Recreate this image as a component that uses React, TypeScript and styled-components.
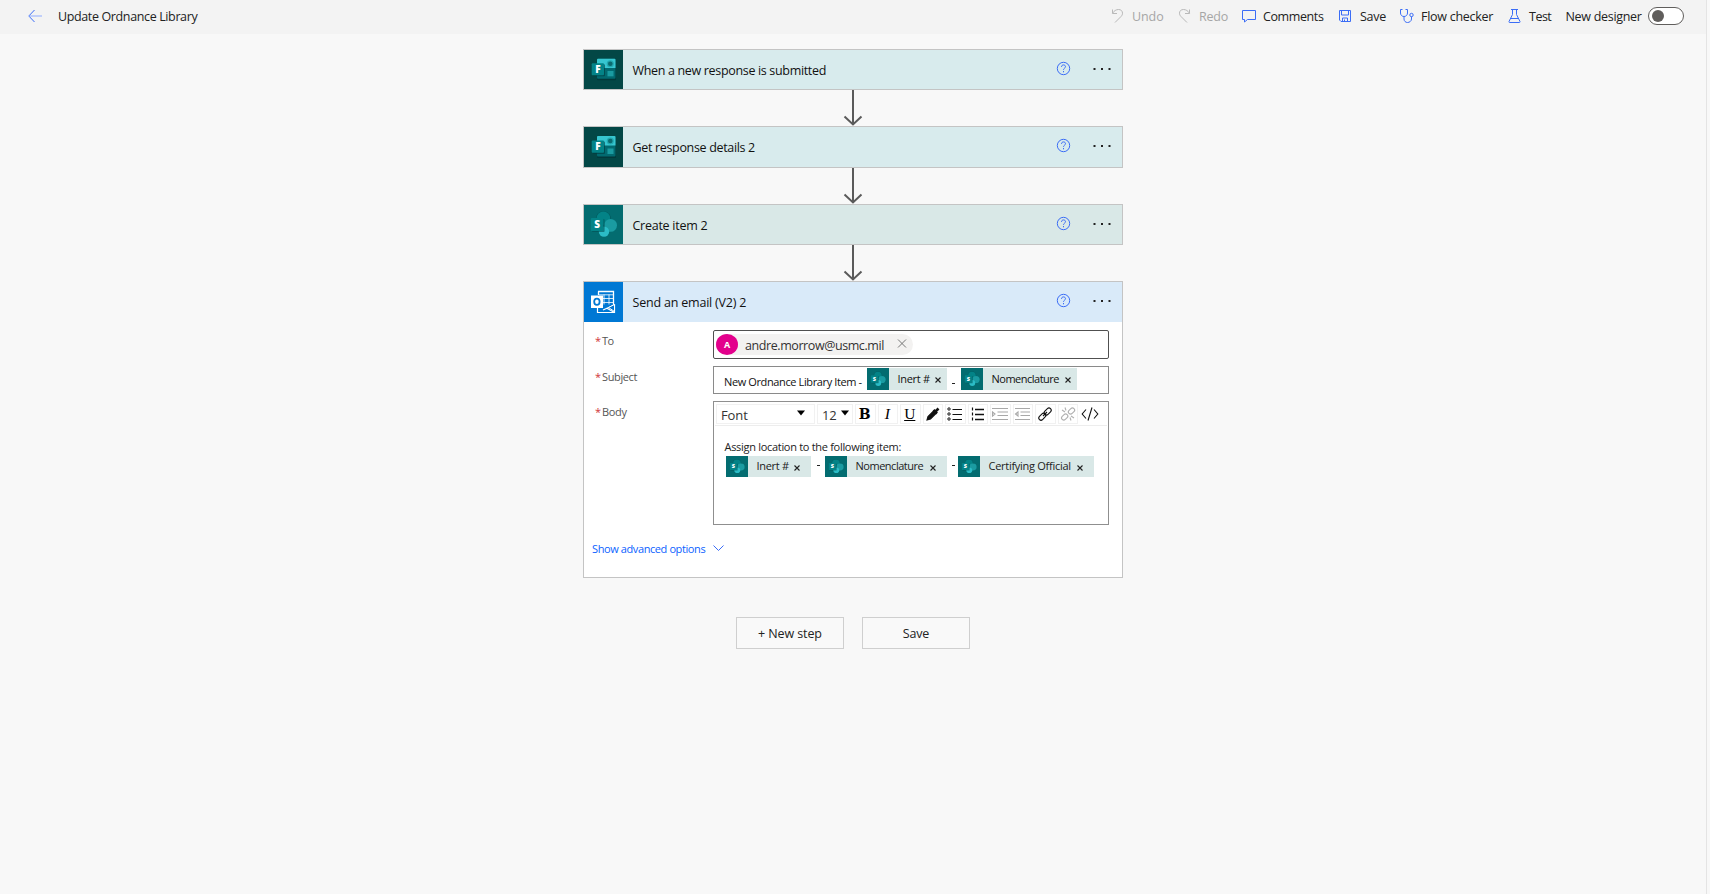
import React from 'react';
import styled, { createGlobalStyle, css } from 'styled-components';

const GlobalStyle = createGlobalStyle`
  * { box-sizing: border-box; }
  html, body, #root { height: 100%; }
  body {
    margin: 0;
    background: #f8f8f8;
    font-family: 'Open Sans', 'Noto Sans', sans-serif;
    color: #111;
    overflow: hidden;
  }
`;

const Page = styled.div`
  width: 1707px;
  height: 100%;
  border-right: 1px solid #e4e4e4;
  background: #f8f8f8;
`;

const Text = styled.span<{ $size?: number; $ls?: number; $color?: string; $w?: number; $drop?: number }>`
  display: block;
  flex: none;
  white-space: nowrap;
  line-height: 16px;
  padding-top: ${p => p.$drop ?? 0}px;
  font-size: ${p => p.$size ?? 12.5}px;
  letter-spacing: ${p => p.$ls ?? 0}px;
  color: ${p => p.$color ?? 'inherit'};
  ${p => p.$w && css`width: ${p.$w}px;`}
`;

/* header bar */
const Header = styled.header`
  height: 34px;
  padding: 0 22px 2px 28px;
  background: #f3f3f3;
  display: flex;
  align-items: center;
`;
const BackIcon = styled.svg`
  width: 15px;
  height: 14px;
  margin-right: 15px;
  flex: none;
`;
const Tools = styled.nav`
  margin-left: auto;
  display: flex;
  align-items: center;
`;
const Tool = styled.div<{ $w: number; $disabled?: boolean }>`
  width: ${p => p.$w}px;
  display: flex;
  align-items: center;
  color: ${p => (p.$disabled ? '#a6a6a6' : '#222')};
`;
const ToolIcon = styled.svg<{ $c?: string }>`
  width: 21px;
  height: 16px;
  flex: none;
  fill: none;
  stroke: ${p => p.$c ?? '#3b6df6'};
  stroke-width: 1;
`;
const Toggle = styled.div`
  width: 36px;
  height: 18px;
  border: 1px solid #605e5c;
  border-radius: 9px;
  background: #fff;
  display: flex;
  align-items: center;
  padding-left: 3px;
`;
const Knob = styled.div`
  width: 12px;
  height: 12px;
  border-radius: 50%;
  background: #605e5c;
`;

/* flow */
const Flow = styled.main`
  width: 540px;
  margin: 15px 0 0 583px;
`;
const Card = styled.section<{ $h: number; $bg: string }>`
  height: ${p => p.$h}px;
  border: 1px solid #c4c4c4;
  background: ${p => p.$bg};
`;
const CardHead = styled.div<{ $h?: number; $bg?: string }>`
  height: ${p => (p.$h ? p.$h + 'px' : '100%')};
  background: ${p => p.$bg ?? 'transparent'};
  display: flex;
  align-items: center;
  color: #111;
`;
const Connector = styled.svg`
  display: block;
  width: 40px;
  height: 36px;
  margin-left: 250px;
  fill: none;
  stroke: #5a5a5a;
  stroke-width: 2;
`;
const AppIcon = styled.svg<{ $s?: number }>`
  width: ${p => p.$s ?? 39}px;
  height: 100%;
  flex: none;
  display: block;
`;
const CardTitle = styled(Text)`
  margin-left: 9.5px;
  flex: 1;
`;
const HelpIcon = styled.svg`
  width: 15px;
  height: 15px;
  margin: 0 22px 3px 0;
  fill: none;
  stroke: #3b6df6;
`;
const Dots = styled.svg`
  width: 18px;
  height: 4px;
  margin: 0 11px 2px 0;
  fill: #222;
`;

/* email form */
const Form = styled.div`
  background: #fff;
  padding: 8px 13px 0 11px;
`;
const Row = styled.div<{ $gap?: number }>`
  display: flex;
  margin-bottom: ${p => p.$gap ?? 7}px;
`;
const Label = styled.div`
  width: 118px;
  flex: none;
  display: flex;
  padding-top: 3px;
  color: #555;
`;
const Star = styled(Text)`
  width: 7px;
  color: #d13438;
`;
const ToBox = styled.div`
  flex: 1;
  height: 29px;
  border: 1px solid #505050;
  border-radius: 2px;
  padding: 0 2px;
  display: flex;
  align-items: center;
`;
const Pill = styled.div`
  width: 197px;
  height: 21px;
  border-radius: 11px;
  background: #f3f2f1;
  display: flex;
  align-items: center;
`;
const Avatar = styled.div`
  width: 22px;
  height: 21px;
  border-radius: 50%;
  background: #e3008c;
  color: #fff;
  font-size: 9px;
  font-weight: 700;
  line-height: 21px;
  text-align: center;
  margin-right: 7px;
`;
const RemoveIcon = styled.svg`
  width: 10px;
  height: 10px;
  margin-bottom: 2px;
  fill: none;
  stroke: #777;
`;
const SubjectBox = styled.div`
  flex: 1;
  height: 28px;
  border: 1px solid #8a8a8a;
  padding: 1px 0 0 10px;
  display: flex;
  align-items: flex-start;
`;
const Token = styled.div<{ $w: number; $h: number }>`
  width: ${p => p.$w}px;
  height: ${p => p.$h}px;
  flex: none;
  background: #d9e8e7;
  display: flex;
  align-items: center;
`;
const TokenText = styled(Text)`
  margin: 0 0 1px 8.5px;
  flex: 1;
`;
const Cross = styled.svg<{ $mr: number; $mt: number }>`
  width: 6px;
  height: 6px;
  flex: none;
  margin: ${p => p.$mt}px ${p => p.$mr}px 0 0;
  stroke: #222;
  stroke-width: 1.1;
`;
const Dash = styled.div<{ $w: number; $top: number; $left: number }>`
  width: ${p => p.$w}px;
  padding: ${p => p.$top}px 0 0 ${p => p.$left}px;
  flex: none;
  &::before {
    content: '';
    display: block;
    width: 3px;
    height: 1px;
    background: #222;
  }
`;
const BodyBox = styled.div`
  flex: 1;
  height: 124px;
  border: 1px solid #8f8f8f;
`;
const EditBar = styled.div`
  height: 23px;
  margin: 1px 1px 0 1px;
  padding: 1px 0 0 1px;
  border-bottom: 1px solid #ededed;
  display: flex;
  gap: 2px;
`;
const Select = styled.div<{ $w: number }>`
  width: ${p => p.$w}px;
  height: 20px;
  border: 1px solid #f1f1f1;
  flex: none;
  display: flex;
  align-items: center;
  justify-content: space-between;
  padding: 2px 2px 0 4px;
  color: #333;
`;
const Caret = styled.svg<{ $mr: number }>`
  width: 8px;
  height: 6px;
  margin: 0 ${p => p.$mr}px 4px 0;
`;
const EditButton = styled.div<{ $plain?: boolean }>`
  width: 20.5px;
  height: 20px;
  flex: none;
  border: 1px solid ${p => (p.$plain ? 'transparent' : '#f1f1f1')};
  display: flex;
  align-items: center;
  justify-content: center;
`;
const Glyph = styled.span<{ $b?: boolean; $i?: boolean; $u?: boolean }>`
  font-family: ${p => (p.$b ? "'DejaVu Serif'" : "'Liberation Serif'")}, serif;
  font-size: ${p => (p.$b ? 14 : 15.5)}px;
  line-height: 16px;
  padding-right: 1px;
  color: #000;
  font-weight: ${p => (p.$b ? 700 : 400)};
  font-style: ${p => (p.$i ? 'italic' : 'normal')};
  text-decoration: ${p => (p.$u ? 'underline' : 'none')};
`;
const EditIcon = styled.svg<{ $c?: string }>`
  width: 18px;
  height: 16px;
  flex: none;
  fill: none;
  stroke: ${p => p.$c ?? '#111'};
  stroke-width: 1.1;
`;
const BodyText = styled.div`
  padding: 13px 0 0 10.5px;
  color: #222;
`;
const TokenRow = styled.div`
  display: flex;
  margin: 1px 0 0 1.5px;
`;
const Advanced = styled.div`
  display: flex;
  align-items: center;
  height: 16px;
  margin: 16px 0 0 -3px;
  color: #0b5fff;
`;
const Chevron = styled.svg`
  width: 11px;
  height: 6px;
  margin: 0 0 2px 8px;
  fill: none;
  stroke: #3b6df6;
`;
const Actions = styled.div`
  display: flex;
  gap: 18px;
  margin: 39px 0 0 153px;
`;
const Button = styled.button`
  width: 108px;
  height: 32px;
  border: 1px solid #cfcfcf;
  background: #f9f9f9;
  padding: 2px 0 0;
  font-family: inherit;
  color: #222;
  display: flex;
  align-items: center;
  justify-content: center;
`;

const FormsIcon = () => (
  <AppIcon viewBox="0 0 39 40" preserveAspectRatio="none">
    <rect width="39" height="40" fill="#034746" />
    <rect x="13" y="9.5" width="19" height="21.5" rx="1" fill="#02393b" />
    <rect x="13" y="9" width="18.5" height="20.5" rx="1" fill="#026a70" />
    <path d="M14 9h16.5a1 1 0 0 1 1 1v8.5H13V10a1 1 0 0 1 1-1z" fill="#37c6d0" />
    <circle cx="26.3" cy="14" r="3.6" fill="#23a9b0" />
    <circle cx="26.3" cy="14" r="2.3" fill="#0a6b70" />
    <rect x="23.5" y="21.5" width="6" height="5.5" fill="#1a9ba1" />
    <rect x="9" y="14.5" width="12" height="12.5" rx="1" fill="#023b3d" opacity=".6" />
    <rect x="7.7" y="13.5" width="12.3" height="12.3" rx="1" fill="#038387" />
    <text x="13.9" y="23.3" fontSize="10" fontWeight="800" fill="#fff" textAnchor="middle">F</text>
  </AppIcon>
);

const SharePointIcon = ({ size }: { size?: number }) => (
  <AppIcon $s={size} viewBox="0 0 39 39" preserveAspectRatio="none">
    <rect width="39" height="39" fill="#036c70" />
    <circle cx="19.4" cy="13.8" r="7.6" fill="#025a5e" />
    <circle cx="19.4" cy="13.4" r="6.8" fill="#038387" />
    <circle cx="26.6" cy="20.4" r="6.4" fill="#1a9ba1" />
    <circle cx="20" cy="26.6" r="5.2" fill="#2bbcc6" />
    <rect x="8" y="14" width="12.6" height="13" rx="1" fill="#024f52" opacity=".6" />
    <rect x="6.8" y="13" width="12.6" height="13" rx="1" fill="#038387" />
    <text x="13.1" y="23" fontSize="10" fontWeight="800" fill="#fff" textAnchor="middle">S</text>
  </AppIcon>
);

const OutlookIcon = () => (
  <AppIcon viewBox="0 0 39 40">
    <rect width="39" height="40" fill="#0078d4" />
    <g fill="none" stroke="#fff">
      <path d="M14 9.5h15.5V27M14.5 9.5V13" strokeWidth="1.3" />
      <path d="M15 12.8h14M19 16.5h10.5M19 20.5h10.5M20 12.5v10M25 12.5v10" strokeWidth=".8" />
      <path d="M13.5 26v4.5h17V23L19 28M22.5 26l8 4.5" strokeWidth="1.2" />
    </g>
    <path d="M24.5 25.5l6-3v7z" fill="#0078d4" stroke="#fff" />
    <rect x="7" y="13.5" width="12" height="12.5" fill="#fff" />
    <ellipse cx="12.9" cy="19.8" rx="2.7" ry="3.1" fill="none" stroke="#0078d4" strokeWidth="1.8" />
  </AppIcon>
);

const Help = () => (
  <HelpIcon viewBox="0 0 15 15">
    <circle cx="7.5" cy="7.5" r="6.2" />
    <path d="M5.5 5.9c0-1.3.9-2 2-2s2 .7 2 1.8c0 1.4-2 1.6-2 3.1M7.5 10v1.3" />
  </HelpIcon>
);

const More = () => (
  <Dots viewBox="0 0 18 4">
    <rect x="0.5" y="1" width="2" height="2" />
    <rect x="8" y="1" width="2" height="2" />
    <rect x="15.5" y="1" width="2" height="2" />
  </Dots>
);

const Arrow = () => (
  <Connector viewBox="0 0 40 36">
    <path d="M20 0v34M11.5 26.5l8.5 8 8.5-8" />
  </Connector>
);

const Step = ({ h, bg, icon, title, ls }: { h: number; bg: string; icon: React.ReactNode; title: string; ls: number }) => (
  <Card $h={h} $bg={bg}>
    <CardHead>
      {icon}
      <CardTitle $ls={ls} $drop={2}>{title}</CardTitle>
      <Help />
      <More />
    </CardHead>
  </Card>
);

const Tok = ({ w, h, ls, label }: { w: number; h: number; ls: number; label: string }) => (
  <Token $w={w} $h={h}>
    <SharePointIcon size={22} />
    <TokenText $size={11} $ls={ls}>{label}</TokenText>
    <Cross viewBox="0 0 6 6" $mr={h === 21 ? 11 : 6} $mt={h === 21 ? 3 : 1}>
      <path d="M.5.5l5 5M5.5.5l-5 5" />
    </Cross>
  </Token>
);

const FieldLabel = ({ ls, children }: { ls: number; children: string }) => (
  <Label>
    <Star $size={11}>*</Star>
    <Text $size={11} $ls={ls}>{children}</Text>
  </Label>
);

const Down = ({ mr }: { mr: number }) => (
  <Caret viewBox="0 0 8 6" $mr={mr}><path d="M0 .5h8L4 5.5z" fill="#000" /></Caret>
);

export default function App() {
  return (
    <>
      <GlobalStyle />
      <Page>
        <Header>
          <BackIcon viewBox="0 0 15 14" fill="none" stroke="#3b6df6">
            <path d="M6.5 1L.8 7l5.7 6" />
            <path d="M1 7h13" stroke="#8fabff" />
          </BackIcon>
          <Text $ls={-0.37} $drop={1.5} $color="#222">Update Ordnance Library</Text>
          <Tools>
            <Tool $w={67} $disabled>
              <ToolIcon viewBox="0 0 21 16" $c="#b8b8b8">
                <path d="M1.5 1.5v4H6M1.5 5.2C3 3 5 1.500 7.500 1.500c2.600 0 4 1.600 4 3.700 0 1.300-.5 2.300-1.500 3.300L4 14.500" />
              </ToolIcon>
              <Text $ls={-0.1} $drop={1.5}>Undo</Text>
            </Tool>
            <Tool $w={64} $disabled>
              <ToolIcon viewBox="0 0 21 16" $c="#b8b8b8">
                <path d="M11.500 1.500v4H7M11.500 5.200C10 3 8 1.500 5.500 1.500c-2.600 0-4 1.600-4 3.700 0 1.300.5 2.300 1.500 3.300l6 6" />
              </ToolIcon>
              <Text $ls={-0.2} $drop={1.5}>Redo</Text>
            </Tool>
            <Tool $w={97}>
              <ToolIcon viewBox="0 0 21 16">
                <path d="M.5 2.500h13v9H5.500l-3 2.500v-2.500h-2z" />
              </ToolIcon>
              <Text $ls={-0.4} $drop={1.5}>Comments</Text>
            </Tool>
            <Tool $w={61}>
              <ToolIcon viewBox="0 0 21 16">
                <path d="M.5 2.500h11v11H2l-1.500-1.500zM2.500 2.500v4.500h7V2.500M3.500 13.500v-3.500h5v3.500M5.500 11.500v2" />
              </ToolIcon>
              <Text $ls={-0.3} $drop={1.5}>Save</Text>
            </Tool>
            <Tool $w={108}>
              <ToolIcon viewBox="0 0 21 16">
                <path d="M2.500 1.500h-2v3.500c0 2 1.500 3.500 3.500 3.500s3.500-1.500 3.500-3.500v-3.500h-2M4 8.500v2.500c0 2 1.500 3.500 3.500 3.500s4-1.500 4-3.500V8.500" />
                <circle cx="11.500" cy="7" r="1.700" />
              </ToolIcon>
              <Text $ls={-0.27} $drop={1.5}>Flow checker</Text>
            </Tool>
            <Tool $w={57.5}>
              <ToolIcon viewBox="0 0 21 16">
                <path d="M3 1.500h7M4.500 1.500v5L1 13.500c-.2.500 0 1 .5 1h10c.5 0 .7-.5.5-1L8.500 6.500v-5M3 10.500h7" />
              </ToolIcon>
              <Text $ls={-0.5} $drop={1.5}>Test</Text>
            </Tool>
            <Text $w={82.5} $ls={-0.3} $drop={1.5} $color="#222">New designer</Text>
            <Toggle><Knob /></Toggle>
          </Tools>
        </Header>

        <Flow>
          <Step h={41} bg="#d8ebed" icon={<FormsIcon />} title="When a new response is submitted" ls={-0.33} />
          <Arrow />
          <Step h={42} bg="#d8ebed" icon={<FormsIcon />} title="Get response details 2" ls={-0.33} />
          <Arrow />
          <Step h={41} bg="#d9e8e7" icon={<SharePointIcon />} title="Create item 2" ls={-0.26} />
          <Arrow />
          <Card $h={297} $bg="#fff">
            <CardHead $h={40} $bg="#d9eaf9">
              <OutlookIcon />
              <CardTitle $ls={-0.2} $drop={2}>Send an email (V2) 2</CardTitle>
              <Help />
              <More />
            </CardHead>
            <Form>
              <Row>
                <FieldLabel ls={-0.5}>To</FieldLabel>
                <ToBox>
                  <Pill>
                    <Avatar>A</Avatar>
                    <Text $w={152} $ls={-0.42} $drop={2} $color="#333">andre.morrow@usmc.mil</Text>
                    <RemoveIcon viewBox="0 0 10 10"><path d="M1 .5l8 8M9 .5l-8 8" /></RemoveIcon>
                  </Pill>
                </ToBox>
              </Row>
              <Row>
                <FieldLabel ls={-0.37}>Subject</FieldLabel>
                <SubjectBox>
                  <Text $size={11} $ls={-0.38} $w={143} $drop={6}>New Ordnance Library Item -</Text>
                  <Tok w={80} h={22} ls={-0.3} label="Inert #" />
                  <Dash $w={14} $top={15} $left={5} />
                  <Tok w={116} h={22} ls={-0.5} label="Nomenclature" />
                </SubjectBox>
              </Row>
              <Row $gap={0}>
                <FieldLabel ls={-0.3}>Body</FieldLabel>
                <BodyBox>
                  <EditBar>
                    <Select $w={99}><Text $size={13} $ls={-0.1}>Font</Text><Down mr={7} /></Select>
                    <Select $w={36}><Text $size={13} $ls={-0.2}>12</Text><Down mr={1} /></Select>
                    <EditButton><Glyph $b>B</Glyph></EditButton>
                    <EditButton><Glyph $i>I</Glyph></EditButton>
                    <EditButton><Glyph $u>U</Glyph></EditButton>
                    <EditButton>
                      <EditIcon viewBox="0 0 18 16">
                        <path d="M3 14l1-3.500 5.500-5.500 2.500 2.500L6.500 13z" fill="#111" />
                        <path d="M9.500 4l3.500 3.500M11.500 5.500l3-3" strokeWidth="2.600" />
                      </EditIcon>
                    </EditButton>
                    <EditButton>
                      <EditIcon viewBox="0 0 18 16">
                        <path d="M6.500 3.500h9.500M6.500 8.500h9.500M6.500 13.500h9.500" />
                        <g strokeWidth="1"><circle cx="3" cy="3" r="1.200" /><circle cx="3" cy="8" r="1.200" /><circle cx="3" cy="13" r="1.200" /></g>
                      </EditIcon>
                    </EditButton>
                    <EditButton>
                      <EditIcon viewBox="0 0 18 16">
                        <path d="M6 3.500h9M6 8.500h9M6 13.500h9" strokeWidth="1.500" />
                        <path d="M3.500 1.500v3M3.500 6.500v3M3.500 11.500v3" strokeWidth="1.200" />
                      </EditIcon>
                    </EditButton>
                    <EditButton>
                      <EditIcon viewBox="0 0 18 16" $c="#a8a8a8">
                        <path d="M1 2.500h16M6.500 6h10.500M6.500 9.500h10.500M1 13.500h16M1.500 6l2.500 2-2.500 2z" />
                      </EditIcon>
                    </EditButton>
                    <EditButton>
                      <EditIcon viewBox="0 0 18 16" $c="#a8a8a8">
                        <path d="M1 2.500h15M6.500 6h9.500M6.500 9.500h9.500M1 13.500h15M4 6l-2.500 2 2.500 2z" />
                      </EditIcon>
                    </EditButton>
                    <EditButton>
                      <EditIcon viewBox="0 0 18 16">
                        <rect x="-4" y="-2.200" width="8" height="4.400" rx="2.200" transform="translate(11.700 5.500) rotate(-45)" />
                        <rect x="-4" y="-2.200" width="8" height="4.400" rx="2.200" transform="translate(6.300 10.700) rotate(-45)" />
                        <path d="M7 10l4-4" />
                      </EditIcon>
                    </EditButton>
                    <EditButton>
                      <EditIcon viewBox="0 0 18 16" $c="#b0b0b0">
                        <rect x="-3.500" y="-2.200" width="7" height="4.400" rx="2.200" transform="translate(12.500 5) rotate(-45)" />
                        <rect x="-3.500" y="-2.200" width="7" height="4.400" rx="2.200" transform="translate(5.700 11) rotate(-45)" />
                        <path d="M3 4l3 2M6 1.500l1 3M15 12l-3-2M12 14.500l-1-3" />
                      </EditIcon>
                    </EditButton>
                    <EditButton $plain>
                      <EditIcon viewBox="0 0 18 16">
                        <path d="M5 3.500L1.200 8 5 12.500M13 3.500L16.800 8 13 12.500M11 1.500L7 14.500" />
                      </EditIcon>
                    </EditButton>
                  </EditBar>
                  <BodyText>
                    <Text $size={11} $ls={-0.3}>Assign location to the following item:</Text>
                    <TokenRow>
                      <Tok w={85} h={21} ls={-0.3} label="Inert #" />
                      <Dash $w={14} $top={9} $left={6} />
                      <Tok w={122} h={21} ls={-0.48} label="Nomenclature" />
                      <Dash $w={11} $top={9} $left={5} />
                      <Tok w={136} h={21} ls={-0.28} label="Certifying Official" />
                    </TokenRow>
                  </BodyText>
                </BodyBox>
              </Row>
              <Advanced>
                <Text $size={11} $ls={-0.4}>Show advanced options</Text>
                <Chevron viewBox="0 0 11 6"><path d="M.5.5l5 5 5-5" /></Chevron>
              </Advanced>
            </Form>
          </Card>
          <Actions>
            <Button><Text $ls={-0.1}>+ New step</Text></Button>
            <Button><Text $ls={-0.2}>Save</Text></Button>
          </Actions>
        </Flow>
      </Page>
    </>
  );
}
